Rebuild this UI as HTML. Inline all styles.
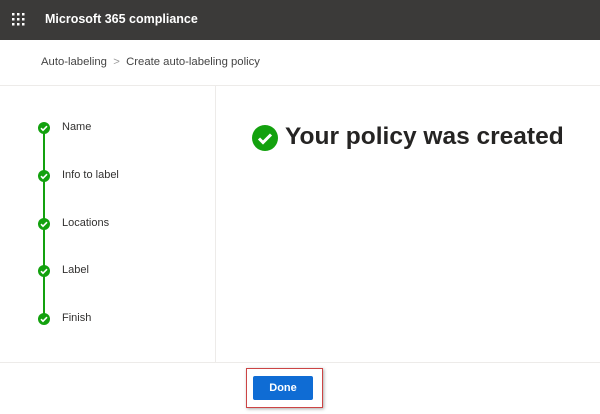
<!DOCTYPE html><html><head><style>
body{margin:0;width:600px;height:414px;background:#fff;font-family:"Liberation Sans",sans-serif;position:relative;overflow:hidden}
.hd{position:absolute;left:0;top:0;width:600px;height:40px;background:#3b3a39;color:#fff}
.hd .t{position:absolute;left:45px;top:12px;font-size:12.5px;font-weight:bold}
.a{position:absolute}
.step{position:absolute;left:62px;font-size:11px;color:#323130}
.c{position:absolute;left:38px;width:12px;height:12px;border-radius:50%;background:#13a10e}
</style></head><body>
<div class="hd"><svg class="a" style="left:12px;top:13px" width="14" height="14">
<g fill="#fff"><rect x="0" y="0" width="2.5" height="2.5"/><rect x="5" y="0" width="2.5" height="2.5"/><rect x="10" y="0" width="2.5" height="2.5"/><rect x="0" y="5" width="2.5" height="2.5"/><rect x="5" y="5" width="2.5" height="2.5"/><rect x="10" y="5" width="2.5" height="2.5"/><rect x="0" y="10" width="2.5" height="2.5"/><rect x="5" y="10" width="2.5" height="2.5"/><rect x="10" y="10" width="2.5" height="2.5"/></g></svg>
<div class="t">Microsoft 365 compliance</div></div>
<div class="a" style="left:41px;top:56px;font-size:11.3px;color:#444">Auto-labeling &nbsp;<span style="color:#999">&gt;</span>&nbsp; Create auto-labeling policy</div>
<div class="a" style="left:0;top:85px;width:600px;height:1px;background:#edebe9"></div>
<div class="a" style="left:215px;top:86px;width:1px;height:276px;background:#edebe9"></div>
<div class="a" style="left:0;top:362px;width:600px;height:1px;background:#edebe9"></div>
<div class="a" style="left:43px;top:128px;width:2px;height:191px;background:#13a10e"></div>
<div class="c" style="top:122px"></div><div class="c" style="top:170px"></div><div class="c" style="top:218px"></div><div class="c" style="top:265px"></div><div class="c" style="top:313px"></div>
<svg class="a" style="left:38px;top:122px" width="12" height="204"><g fill="none" stroke="#fff" stroke-width="1.6"><path d="M3 6.2l2 2 4-4"/><path d="M3 54.2l2 2 4-4"/><path d="M3 102.2l2 2 4-4"/><path d="M3 149.2l2 2 4-4"/><path d="M3 197.2l2 2 4-4"/></g></svg>
<div class="step" style="top:121px">Name</div>
<div class="step" style="top:169px">Info to label</div>
<div class="step" style="top:217px">Locations</div>
<div class="step" style="top:264px">Label</div>
<div class="step" style="top:312px">Finish</div>
<svg class="a" style="left:252px;top:125px" width="26" height="26"><circle cx="13" cy="13" r="13" fill="#13a10e"/><path d="M7 13.5l4 4 8-8" fill="none" stroke="#fff" stroke-width="3"/></svg>
<div class="a" style="left:285px;top:123px;font-size:24.5px;font-weight:bold;color:#252423">Your policy was created</div>
<div class="a" style="left:246px;top:368px;width:75px;height:38px;border:1px solid #c44;box-shadow:1px 1px 3px #aaa"></div>
<div class="a" style="left:253px;top:376px;width:60px;height:24px;background:#0f6cd4;border-radius:2px;color:#fff;font-size:11px;font-weight:bold;text-align:center;line-height:24px">Done</div>
</body></html>
